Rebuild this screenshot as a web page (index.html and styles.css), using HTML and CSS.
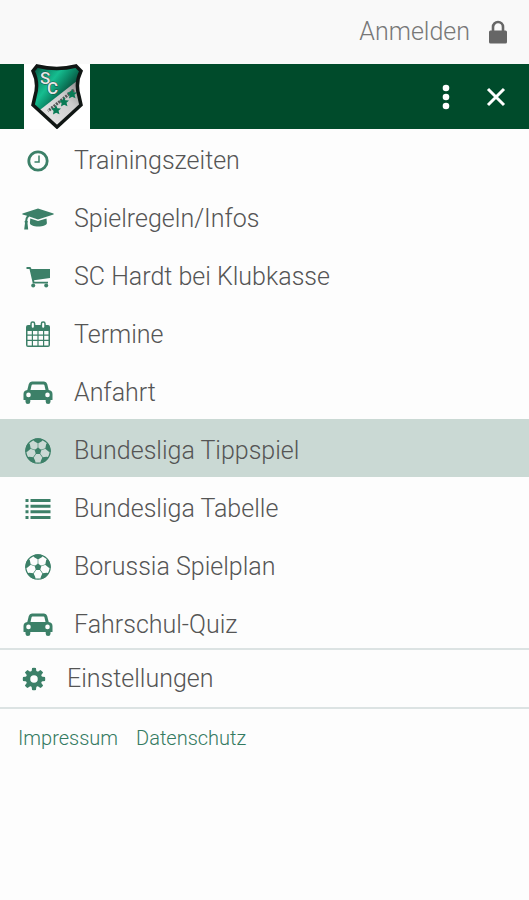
FILE: index.html
```html
<!DOCTYPE html>
<html lang="de">
<head>
<meta charset="utf-8">
<meta name="viewport" content="width=device-width, initial-scale=1">
<title>SC Hardt</title>
<link rel="stylesheet" href="styles.css">
</head>
<body>
<svg class="symbols" aria-hidden="true">
  <symbol id="clock" viewBox="0 0 32 32">
    <circle cx="16" cy="16" r="9.200" fill="none" stroke="currentColor" stroke-width="2.800"/>
    <path d="M17 10.500V17H12.500" fill="none" stroke="currentColor" stroke-width="1.500"/>
  </symbol>
  <symbol id="cap" viewBox="0 0 32 32">
    <path fill="currentColor" d="M16 5.600 31.500 10.600Q32 11 31.500 11.400L16 16.400 7.200 13.500Q5.400 15 5.200 17.600Q6.500 18.400 5.500 20L6.200 26.500H2.200L3 20Q1.900 18.500 3.300 17.600Q3.400 14.600 5 12.800L.5 11.400Q0 11 .5 10.600Z"/>
    <path fill="currentColor" d="m8.300 15.600 7.700 2.500 8.500-2.700.4 4.600c0 2-4 3.500-8.600 3.500s-8.400-1.500-8.400-3.500Z"/>
  </symbol>
  <symbol id="cart" viewBox="0 0 32 32">
    <path fill="currentColor" d="M4.500 6H8Q9 6 9.400 8H28V17L12 19.200 12.400 20.700H26V22.600H10.800L7.500 8H4.500Z"/>
    <circle cx="11.200" cy="24.500" r="2" fill="currentColor"/>
    <circle cx="24.200" cy="24.500" r="2" fill="currentColor"/>
  </symbol>
  <symbol id="calendar" viewBox="0 0 32 32">
    <path fill="currentColor" fill-rule="evenodd" d="M6 6H26Q28 6 28 8V26Q28 28 26 28H6Q4 28 4 26V8Q4 6 6 6ZM5.500 12V15.600H9.800V12ZM11 12V15.600H15.400V12ZM16.600 12V15.600H21V12ZM22.200 12V15.600H26.500V12ZM5.500 16.800V20.700H9.800V16.800ZM11 16.800V20.700H15.400V16.800ZM16.600 16.800V20.700H21V16.800ZM22.200 16.800V20.700H26.500V16.800ZM5.500 21.900V26.500H9.800V21.900ZM11 21.900V26.500H15.400V21.900ZM16.600 21.900V26.500H21V21.900ZM22.200 21.900V26.500H26.500V21.900Z"/>
    <g fill="#fff" stroke="currentColor" stroke-width="1.500"><rect x="9" y="3" width="3.600" height="6.500" rx="1.700"/><rect x="19.400" y="3" width="3.600" height="6.500" rx="1.700"/></g>
  </symbol>
  <symbol id="car" viewBox="0 0 32 32">
    <path fill="currentColor" fill-rule="evenodd" d="M10 4.500H22Q24.500 4.500 25.200 7L26.700 13Q30.500 13.500 30.500 17V22.500Q30.500 23 30 23H28.500V24.700A2.400 2.400 0 0 1 23.700 24.700V23H8.300V24.700A2.400 2.400 0 0 1 3.500 24.700V23H2Q1.500 23 1.500 22.500V17Q1.500 13.500 5.300 13L6.800 7Q7.500 4.500 10 4.500ZM10.500 7.500Q9.800 7.500 9.500 8.400L8.500 13H23.500L22.500 8.400Q22.200 7.500 21.500 7.500ZM6.500 15.600A2.300 2.300 0 1 0 6.500 20.200A2.300 2.300 0 1 0 6.500 15.600ZM25.500 15.600A2.300 2.300 0 1 0 25.500 20.200A2.300 2.300 0 1 0 25.500 15.600Z"/>
  </symbol>
  <symbol id="ball" viewBox="0 0 32 32">
    <circle cx="16" cy="16" r="12.200" fill="none" stroke="currentColor" stroke-width="1.200"/>
    <path fill="currentColor" d="m16 12.500 3.400 2.500-1.300 4h-4.200l-1.300-4Z"/>
    <g fill="currentColor">
      <path id="patch" d="M10.800 4.400Q16 2.300 21.200 4.400L19.800 6.200 16 8.400 12.200 6.200ZM15.700 8H16.300V13H15.700Z"/>
      <use href="#patch" transform="rotate(72 16 16)"/>
      <use href="#patch" transform="rotate(144 16 16)"/>
      <use href="#patch" transform="rotate(216 16 16)"/>
      <use href="#patch" transform="rotate(288 16 16)"/>
    </g>
  </symbol>
  <symbol id="list" viewBox="0 0 32 32">
    <path fill="currentColor" d="M3.500 6h3v3h-3zm5 0H28.500v3H8.500zM3.500 11.700h3v3h-3zm5 0H28.500v3H8.500zM3.500 17.300h3v3h-3zm5 0H28.500v3H8.500zM3.500 23h3v3h-3zm5 0H28.500v3H8.500z"/>
  </symbol>
  <symbol id="gear" viewBox="0 0 32 32">
    <circle cx="16" cy="16" r="6" fill="none" stroke="currentColor" stroke-width="4.500"/>
    <path id="tooth" fill="currentColor" d="m13.500 9 .6-4q1.900-.5 3.800 0l.6 4ZM13.500 23l.6 4q1.900.5 3.800 0l.6-4Z"/>
    <use href="#tooth" transform="rotate(45 16 16)"/>
    <use href="#tooth" transform="rotate(90 16 16)"/>
    <use href="#tooth" transform="rotate(135 16 16)"/>
  </symbol>
</svg>

<div class="account">
  <a class="login" href="#">Anmelden
    <svg class="lock" viewBox="0 0 20 24" aria-hidden="true"><path d="M5 12V7a5 5 0 0 1 10 0v5" fill="none" stroke="currentColor" stroke-width="2.600"/><rect x="1" y="10.500" width="18" height="13" rx="1.500" fill="currentColor"/></svg>
  </a>
</div>

<header class="bar">
  <a class="brand" href="#" aria-label="SC Hardt">
    <svg class="crest" viewBox="0 0 66 65" aria-hidden="true">
      <defs>
        <linearGradient id="green" x1="0" y1="0" x2="1" y2="1"><stop offset="0" stop-color="#064a38"/><stop offset=".13" stop-color="#0a8263"/><stop offset=".32" stop-color="#16bd90"/><stop offset=".42" stop-color="#0d9671"/><stop offset=".6" stop-color="#064c39"/></linearGradient>
        <linearGradient id="silver" x1="0" y1="1" x2="1" y2="0"><stop offset="0" stop-color="#f2f2f2"/><stop offset=".6" stop-color="#ccc"/><stop offset="1" stop-color="#666"/></linearGradient>
        <clipPath id="shield"><path d="M13 2Q33 7 52 2L57 7Q51 19 55 32L57 41 33 63 9 41 11 32Q15 19 9 7Z"/></clipPath>
      </defs>
      <path d="M13 2Q33 7 52 2L57 7Q51 19 55 32L57 41 33 63 9 41 11 32Q15 19 9 7Z" fill="url(#green)"/>
      <g clip-path="url(#shield)">
        <path d="M58 13 12 49 34 68 64 40Z" fill="url(#silver)"/>
        <path d="M50 26 24 47" stroke="#555" stroke-width="3" stroke-dasharray="2 1"/>
        <path id="star" d="m48 25 1.400 3.200 3.600.2-2.500 2.300 1 3.600-3.400-1.600-3.100 1.800.6-3.600-2.400-2.400 3.400-.5Z" fill="#087b55"/>
        <use href="#star" x="-8" y="8"/>
        <use href="#star" x="-16" y="16"/>
      </g>
      <path d="M13 2Q33 7 52 2L57 7Q51 19 55 32L57 41 33 63 9 41 11 32Q15 19 9 7Z" fill="none" stroke="#101614" stroke-width="3.500"/>
      <text class="crest-letters" x="16 23" y="20 30">SC</text>
    </svg>
  </a>
  <button class="action" type="button" aria-label="Mehr"><svg class="action-icon" viewBox="0 0 32 32" aria-hidden="true"><g fill="currentColor"><circle cx="16" cy="7" r="3.300"/><circle cx="16" cy="16" r="3.300"/><circle cx="16" cy="25" r="3.300"/></g></svg></button>
  <button class="action" type="button" aria-label="Schließen"><svg class="action-icon" viewBox="0 0 32 32" aria-hidden="true"><path d="m8 8 16 16m0-16-16 16" stroke="currentColor" stroke-width="3"/></svg></button>
</header>

<nav class="menu">
  <a class="item" href="#"><svg class="icon"><use href="#clock"/></svg>Trainingszeiten</a>
  <a class="item" href="#"><svg class="icon"><use href="#cap"/></svg>Spielregeln/Infos</a>
  <a class="item" href="#"><svg class="icon"><use href="#cart"/></svg>SC Hardt bei Klubkasse</a>
  <a class="item" href="#"><svg class="icon"><use href="#calendar"/></svg>Termine</a>
  <a class="item" href="#"><svg class="icon"><use href="#car"/></svg>Anfahrt</a>
  <a class="item active" href="#" aria-current="page"><svg class="icon"><use href="#ball"/></svg>Bundesliga Tippspiel</a>
  <a class="item" href="#"><svg class="icon"><use href="#list"/></svg>Bundesliga Tabelle</a>
  <a class="item" href="#"><svg class="icon"><use href="#ball"/></svg>Borussia Spielplan</a>
  <a class="item" href="#"><svg class="icon"><use href="#car"/></svg>Fahrschul-Quiz</a>
</nav>
<a class="settings" href="#"><svg class="icon"><use href="#gear"/></svg>Einstellungen</a>
<footer class="legal">
  <a href="#">Impressum</a>
  <a href="#">Datenschutz</a>
</footer>
</body>
</html>
```
FILE: styles.css
```css
* {
  box-sizing: border-box;
}

body {
  margin: 0;
  background: #fdfdfd;
  color: #555;
  font-family: Roboto, "Liberation Sans", sans-serif;
  font-size: 25px;
  font-weight: 300;
  line-height: 32px;
}

a {
  color: inherit;
  text-decoration: none;
}

.symbols {
  position: absolute;
  width: 0;
  height: 0;
}

.account {
  display: flex;
  justify-content: flex-end;
  padding: 16px 21px;
  background: #f9f9f9;
}

.login {
  display: flex;
  align-items: center;
  gap: 18px;
  color: #777;
}

.lock {
  width: 20px;
  height: 24px;
  color: #666;
}

.bar {
  display: flex;
  align-items: center;
  padding: 0 8px 0 24px;
  background: #004b2b;
}

.brand {
  width: 66px;
  margin-right: auto;
  background: #fff;
}

.crest {
  display: block;
  width: 66px;
  height: 65px;
}

.crest-letters {
  fill: #e4e8e7;
  stroke: #26483f;
  stroke-width: 1px;
  paint-order: stroke;
  font: 500 17px Roboto, sans-serif;
}

.action {
  display: grid;
  place-items: center;
  width: 50px;
  height: 50px;
  padding: 0;
  border: 0;
  background: none;
  color: #fff;
}

.action-icon {
  width: 32px;
  height: 32px;
}

.menu {
  border-bottom: 2px solid #dce3e3;
}

.item {
  display: flex;
  align-items: center;
  gap: 20px;
  height: 58px;
  padding: 6px 22px 0;
}

.item:last-child {
  align-items: flex-start;
  height: 55px;
  padding-top: 16px;
}

.active {
  background: #cad9d4;
}

.icon {
  width: 32px;
  height: 32px;
  color: #3c8068;
}

.settings {
  display: flex;
  align-items: center;
  gap: 17px;
  height: 59px;
  padding: 0 18px;
  border-bottom: 2px solid #dce3e3;
}

.legal {
  display: flex;
  gap: 18px;
  padding: 13px 18px;
  color: #347a61;
  font-size: 20px;
}
```
